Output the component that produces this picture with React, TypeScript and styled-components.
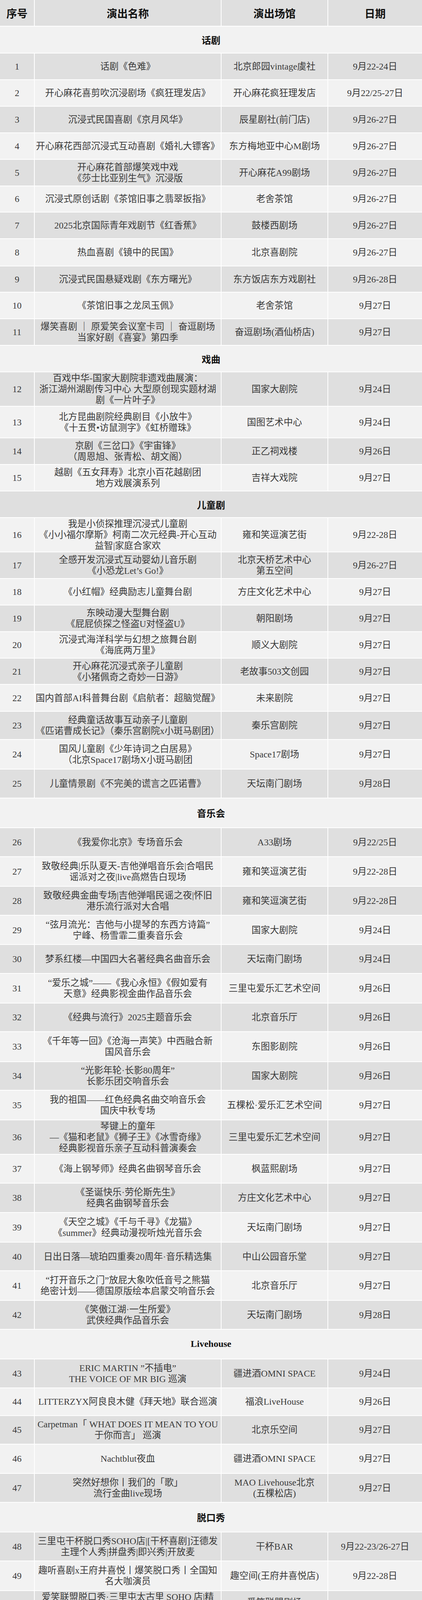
import React from 'react';
import styled, { createGlobalStyle } from 'styled-components';

const GlobalStyle = createGlobalStyle`
  html, body { margin: 0; padding: 0; background: #ffffff; }
  body { font-family: "Liberation Serif", "Noto Sans CJK SC", serif; }
`;

type RowData = [number, string, string, string, number];
type Section = { title: string; h: number; rows: RowData[] };

const sections: Section[] = [
  {
    title: '话剧', h: 67, rows: [
      [1, '话剧《色难》', '北京郎园vintage虞社', '9月22-24日', 66],
      [2, '开心麻花喜剪吹沉浸剧场《疯狂理发店》', '开心麻花疯狂理发店', '9月22/25-27日', 66],
      [3, '沉浸式民国喜剧《京月风华》', '辰星剧社(前门店)', '9月26-27日', 66],
      [4, '开心麻花西部沉浸式互动喜剧《婚礼大镖客》', '东方梅地亚中心M剧场', '9月26-27日', 66],
      [5, '开心麻花首部爆笑戏中戏\n《莎士比亚别生气》沉浸版', '开心麻花A99剧场', '9月26-27日', 65.5],
      [6, '沉浸式原创话剧《茶馆旧事之翡翠扳指》', '老舍茶馆', '9月26-27日', 65.5],
      [7, '2025北京国际青年戏剧节《红香蕉》', '鼓楼西剧场', '9月26-27日', 66],
      [8, '热血喜剧《镜中的民国》', '北京喜剧院', '9月26-27日', 68],
      [9, '沉浸式民国悬疑戏剧《东方曙光》', '东方饭店东方戏剧社', '9月26-28日', 65],
      [10, '《茶馆旧事之龙凤玉佩》', '老舍茶馆', '9月27日', 66],
      [11, '爆笑喜剧 ｜ 原爱笑会议室卡司 ｜ 奋逗剧场\n当家好剧《喜宴》第四季', '奋逗剧场(酒仙桥店)', '9月27日', 66],
    ],
  },
  {
    title: '戏曲', h: 66, rows: [
      [12, '百戏中华-国家大剧院非遗戏曲展演：\n浙江湖州湖剧传习中心 大型原创现实题材湖\n剧《一片叶子》', '国家大剧院', '9月24日', 86],
      [13, '北方昆曲剧院经典剧目《小放牛》\n《十五贯•访鼠测字》《虹桥赠珠》', '国图艺术中心', '9月24日', 79],
      [14, '京剧《三岔口》《宇宙锋》\n（周恩旭、张青松、胡文阁）', '正乙祠戏楼', '9月26日', 65.5],
      [15, '越剧《五女拜寿》北京小百花越剧团\n地方戏展演系列', '吉祥大戏院', '9月27日', 66.5],
    ],
  },
  {
    title: '儿童剧', h: 66, rows: [
      [16, '我是小侦探推理沉浸式儿童剧\n《小小福尔摩斯》柯南二次元经典-开心互动\n益智|家庭合家欢', '雍和笑逗演艺街', '9月22-28日', 86],
      [17, '全感开发沉浸式互动婴幼儿音乐剧\n《小恐龙Let\u2019s Go!》', '北京天桥艺术中心\n第五空间', '9月26-27日', 66],
      [18, '《小红帽》经典励志儿童舞台剧', '方庄文化艺术中心', '9月27日', 66],
      [19, '东映动漫大型舞台剧\n《屁屁侦探之怪盗U对怪盗U》', '朝阳剧场', '9月27日', 65.6],
      [20, '沉浸式海洋科学与幻想之旅舞台剧\n《海底两万里》', '顺义大剧院', '9月27日', 66.4],
      [21, '开心麻花沉浸式亲子儿童剧\n《小猪佩奇之奇妙一日游》', '老故事503文创园', '9月27日', 65.5],
      [22, '国内首部AI科普舞台剧《启航者：超脑觉醒》', '未来剧院', '9月27日', 66.2],
      [23, '经典童话故事互动亲子儿童剧\n《匹诺曹成长记》（秦乐宫剧院x小斑马剧团）', '秦乐宫剧院', '9月27日', 70.3],
      [24, '国风儿童剧《少年诗词之白居易》\n（北京Space17剧场X小斑马剧团', 'Space17剧场', '9月27日', 74],
      [25, '儿童情景剧《不完美的谎言之匹诺曹》', '天坛南门剧场', '9月28日', 72],
    ],
  },
  {
    title: '音乐会', h: 73.7, rows: [
      [26, '《我爱你北京》专场音乐会', 'A33剧场', '9月22/25日', 72.1],
      [27, '致敬经典|乐队夏天-吉他弹唱音乐会|合唱民\n谣派对之夜|live高燃告白现场', '雍和笑逗演艺街', '9月22-28日', 73.8],
      [28, '致敬经典金曲专场|吉他弹唱民谣之夜|怀旧\n港乐流行派对大合唱', '雍和笑逗演艺街', '9月22-28日', 72.4],
      [29, '“弦月流光：吉他与小提琴的东西方诗篇”\n宁峰、杨雪霏二重奏音乐会', '国家大剧院', '9月24日', 73.4],
      [30, '梦系红楼—中国四大名著经典名曲音乐会', '天坛南门剧场', '9月24日', 71.3],
      [31, '“爱乐之城”——《我心永恒》《假如爱有\n天意》经典影视金曲作品音乐会', '三里屯爱乐汇艺术空间', '9月26日', 74.3],
      [32, '《经典与流行》2025主题音乐会', '北京音乐厅', '9月26日', 71],
      [33, '《千年等一回》《沧海一声笑》中西融合新\n国风音乐会', '东图影剧院', '9月26日', 74.7],
      [34, '“光影年轮·长影80周年”\n长影乐团交响音乐会', '国家大剧院', '9月26日', 71.7],
      [35, '我的祖国——红色经典名曲交响音乐会\n国庆中秋专场', '五棵松·爱乐汇艺术空间', '9月27日', 74.1],
      [36, '琴键上的童年\n—《猫和老鼠》《狮子王》《冰雪奇缘》\n经典影视音乐亲子互动科普演奏会', '三里屯爱乐汇艺术空间', '9月27日', 85.2],
      [37, '《海上钢琴师》经典名曲钢琴音乐会', '枫蓝熙剧场', '9月27日', 72.3],
      [38, '《圣诞快乐·劳伦斯先生》\n经典名曲钢琴音乐会', '方庄文化艺术中心', '9月27日', 72.7],
      [39, '《天空之城》《千与千寻》《龙猫》\n《summer》经典动漫视听烛光音乐会', '天坛南门剧场', '9月27日', 74.3],
      [40, '日出日落—琥珀四重奏20周年·音乐精选集', '中山公园音乐堂', '9月27日', 71.5],
      [41, '“打开音乐之门”放屁大象吹低音号之熊猫\n绝密计划——德国原版绘本启蒙交响音乐会', '北京音乐厅', '9月27日', 73.8],
      [42, '《笑傲江湖·一生所爱》\n武侠经典作品音乐会', '天坛南门剧场', '9月28日', 72.1],
    ],
  },
  {
    title: 'Livehouse', h: 73.3, rows: [
      [43, 'ERIC MARTIN ”不插电”\nTHE VOICE OF MR BIG 巡演', '疆进酒OMNI SPACE', '9月24日', 72.1],
      [44, 'LITTERZYX阿良良木健《拜天地》联合巡演', '福浪LiveHouse', '9月26日', 69.2],
      [45, 'Carpetman「 WHAT DOES IT MEAN TO YOU\n于你而言」 巡演', '北京乐空间', '9月27日', 71],
      [46, 'Nachtblut夜血', '疆进酒OMNI SPACE', '9月27日', 73],
      [47, '突然好想你丨我们的「歌」\n流行金曲live现场', 'MAO Livehouse北京\n(五棵松店)', '9月27日', 72.2],
    ],
  },
  {
    title: '脱口秀', h: 73.8, rows: [
      [48, '三里屯干杯脱口秀SOHO店|[干杯喜剧]汪德发\n主理个人秀|拼盘秀|即兴秀|开放麦', '干杯BAR', '9月22-23/26-27日', 72],
      [49, '趣听喜剧x王府井喜悦丨爆笑脱口秀丨全国知\n名大咖演员', '趣空间(王府井喜悦店)', '9月22-28日', 74.6],
      [50, '爱笑联盟脱口秀·三里屯太古里 SOHO 店|精\n品喜剧之夜|周一至周日|网红打卡地|即兴开\n放麦吐槽专场', '爱笑联盟剧场\n(三里屯SOHO店)', '9月22-28日', 84.4],
      [51, '磁场喜剧x南锣鼓巷必打卡 ｜ 全国知名脱口\n秀大咖 ｜ 周一至周日持续爆笑 ｜', '磁场南锣剧场', '9月22-28日', 73.7],
      [52, '三里屯太古里爆笑脱口秀|天天综艺卡司|吐\n槽爆笑大会|开心互动|即兴喜剧之夜精品秀', '三里屯脱口秀俱乐部', '9月22-28日', 72.3],
      [53, '三里屯脱口秀丨周一至周日丨综艺卡司丨吐\n槽爆笑大会丨开心互动丨【大笑喜剧】即兴\n喜剧爆笑之夜精品秀>', '北京脱口秀空间剧场', '9月22-28日', 85.7],
      [54, '三里屯太古里脱口秀喜剧丨限量特惠丨每周\n一至周日爆笑脱口秀喜剧大会丨魔脱喜剧', '魔脱喜剧-三里屯SOHO店', '9月22-28日', 72.1],
      [55, '脱口秀入门|趣听喜剧开放麦|\n周中爆笑不间断！', '单立人DownTown', '9月22-23/28日', 74.2],
      [56, '波波笑剧场-常营陆港城店-北京必打卡地 爆\n笑单口喜剧+即兴喜剧', '波波笑剧场\n(北京常营陆港城店)', '9月23-28日', 72],
      [57, '波波笑剧场-三里屯爆笑脱口秀+即兴喜剧-\n8.16帅帅《男左女右》-李波的剧场-必打卡\n东北喜剧天花板', '波波笑剧场(北京店)', '9月23-28日', 86],
      [58, '喜番喜剧丨酒吧精品脱口秀丨边喝边看丨综\n艺卡司丨解压打卡', '喜番club', '9月24-27日', 72],
      [59, '大逗喜剧丨开放麦丨单口喜剧丨漫才丨\n即兴丨相声丨', '宣南剧场', '9月26日', 74],
      [60, '趣听喜剧x西城 ｜ 艾斯单口喜剧专场\n《我展示》', '趣听喜剧(西直门店)', '9月26日', 72.4],
      [61, '趣听喜剧x东城鼓楼丨爆笑脱口秀丨\n全国知名大咖演员', '小金鱼剧场', '9月26-27日', 72.1],
      [62, '万达五棵松脱口秀专场丨开心解压丨吐槽大\n会丨即兴丨魔术丨嘻哈爱乐丨华熙live', '格乐丽雅·G婚礼艺术中\n心(五棵松万达店)', '9月27日', 72.9],
      [63, '听云轩周末喜剧脱口秀', '王四营听云轩剧场', '9月27日', 73.4],
      [64, '趣听喜剧x朝阳望京丨爆笑脱口秀丨\n全国知名大咖演员', '开心麻花磁剧场', '9月27日', 72.2],
      [65, '长辛八点半脱口秀', '长辛八点半演艺空间', '9月27-28日', 73.6],
      [66, '猫头鹰喜剧丨每周二三四六脱口秀开放麦/\n精选秀@东四', 'NEST 巢空间', '9月27-28日', 72.1],
      [67, '脱口秀开放麦----五棵松剧场', '嘻哈包袱铺五棵松剧场', '9月27-28日', 71.3],
      [68, '周日开放麦丨东城英语单口喜剧丨北京英文\n脱口秀（城堡喜剧）', '南阳共享际剧场', '9月28日', 71],
    ],
  },
  {
    title: '曲艺', h: 74, rows: [
      [69, '《德云社相声大会》', '德云社三里屯剧场', '9月22-28日', 71],
      [70, '《德云社相声大会》', '广德楼戏园', '9月22-28日', 73.5],
      [71, '《德云社相声大会》', '三庆园', '9月22-28日', 72.5],
      [72, '京味儿相声专场演出', '老舍茶馆', '9月22-28日', 73.8],
      [73, '北京刘老根大舞台', '北京刘老根大舞台', '9月22-28日', 72.1],
      [74, '评书连播丨五书齐开—国潮故事每日打卡丨\n精彩爆笑来袭', '火家瓦社', '9月22-28日', 73.7],
      [75, '北京·相声剧+相声-沉浸式互动相声live', '听海阁相声会馆', '9月22-28日', 71.7],
      [76, '【嘻哈包袱铺】相声专场演出-五棵松剧场', '嘻哈包袱铺五棵松剧场', '9月22-28日', 73.7],
      [77, '《德云社相声大会》', '德云社学院路剧场', '9月23-28日', 72.6],
      [78, '北京曲艺团“京味儿剧场”\n《北京记忆》曲艺专场演出', '天坛南门剧场', '9月26日', 72.9],
      [79, '北京曲艺团“京味儿”剧场曲艺专场演出', '中国木偶剧院', '9月27日', 71.5],
      [80, '北京曲艺团“京味儿剧场“\n《笑满京城》相声专场演出', '天坛南门剧场', '9月27日', 74],
      [81, '大逗相声专场——宣南剧场', '宣南剧场', '9月27日', 72.4],
      [82, '红壶相声社·精品相声大会', '方庄文化艺术中心', '9月27日', 74.2],
      [83, '“千年等一回”——上海评弹团专场', '国家大剧院', '9月27日', 71.4],
      [84, '北京曲艺团&老舍茶馆《鼓曲》专场', '老舍茶馆', '9月28日', 74],
      [85, '“红楼梦中人”——评弹流派演唱会', '国家大剧院', '9月28日', 72.5],
    ],
  },
  {
    title: '综艺及其他', h: 73, rows: [
      [86, '雍和沉浸魔术科学《魔法与物理奇妙》\n互动儿童剧|家庭合家欢学院', '雍和笑逗演艺街', '9月22-28日', 71.5],
      [87, '《四季北京.茶》京味综艺演出', '老舍茶馆', '9月22-28日', 73.9],
      [88, '《梦华·长城》', '北京世园公园', '9月22-28日', 72.5],
      [89, '功夫秀', '秦乐宫剧院', '9月22-28日', 72.1],
      [90, '大型多媒体杂技剧《绝技秀之蜀国英雄》', '红剧场', '9月22-28日', 71],
      [91, '《欢乐北京》-北京歌剧舞剧院驻场演出', '广德楼戏园', '9月26-28日', 72.9],
      [92, '沉浸式亲子互动\n《泡泡魔法2100》魔术泡泡秀', '三里屯爱乐汇艺术空间', '9月27日', 72.2],
      [93, '沉浸式互动魔术科学实验秀《童梦奇缘》', '辰星剧社(前门店)', '9月27日', 73],
      [94, '亲子魔术儿童互动秀 ｜ 见证奇迹的时刻《魔\n法学院奇妙夜》 ｜ 磁场喜剧×南锣鼓巷', '磁场南锣剧场', '9月27日', 72.4],
      [95, '亲子魔幻派对·中国首个魔术肢体默剧“查\n尔先生的皮箱”', '三里屯爱乐汇艺术空间', '9月27日', 73.5],
      [96, '三里屯《演奏家的打击乐》沉浸互动|音乐启\n蒙|魔法丨亲子儿童剧丨开心小麦丨物理', '爱笑联盟剧场\n(三里屯SOHO店)', '9月27-28日', 72.5],
      [97, '《好歌天天唱》\n——北京歌剧舞剧院驻场演出', '火家瓦社', '9月27-28日', 73.4],
    ],
  },
];

const SHADE = '#dfdfdf';
const LIGHT = '#f2f2f2';

const Table = styled.div`
  width: 1080px;
  display: flex;
  flex-direction: column;
  gap: 2px;
  background: #ffffff;
  color: #3a3a3a;
  font-family: "Liberation Serif", "Noto Sans CJK SC", serif;
`;

const Row = styled.div<{ $h: number; $shade: boolean }>`
  --bg: ${p => (p.$shade ? SHADE : LIGHT)};
  display: grid;
  grid-template-columns: 87px 476px 271px 1fr;
  column-gap: 2px;
  height: ${p => p.$h}px;
  background: #ffffff;
`;

const Cell = styled.div`
  background: var(--bg);
  display: flex;
  flex-direction: column;
  align-items: center;
  justify-content: center;
  text-align: center;
  font-size: 23.5px;
  min-width: 0;
`;

const HeadCell = styled(Cell)`
  font-size: 27px;
  font-weight: 700;
  color: #111111;
`;

const Line = styled.span`
  display: block;
  white-space: nowrap;
  line-height: 28px;
`;

const SectionRow = styled.div<{ $h: number; $shade: boolean }>`
  height: ${p => p.$h}px;
  background: ${p => (p.$shade ? SHADE : LIGHT)};
  display: flex;
  align-items: center;
  justify-content: center;
  font-size: 24px;
  font-weight: 700;
  color: #111111;
`;

const Footer = styled.div<{ $shade: boolean }>`
  height: 66px;
  background: ${p => (p.$shade ? SHADE : LIGHT)};
  display: flex;
  align-items: center;
  padding-left: 24px;
  font-size: 24px;
  color: #333333;
  white-space: nowrap;
`;

const Lines: React.FC<{ text: string }> = ({ text }) => (
  <>
    {text.split('\n').map((l, i) => (
      <Line key={i}>{l}</Line>
    ))}
  </>
);

export default function App() {
  let idx = 0;
  const items: React.ReactNode[] = [];
  items.push(
    <Row key="head" $h={66} $shade={idx++ % 2 === 0}>
      <HeadCell>序号</HeadCell>
      <HeadCell>演出名称</HeadCell>
      <HeadCell>演出场馆</HeadCell>
      <HeadCell>日期</HeadCell>
    </Row>
  );
  sections.forEach(sec => {
    items.push(
      <SectionRow key={'s' + sec.title} $h={sec.h} $shade={idx++ % 2 === 0}>
        {sec.title}
      </SectionRow>
    );
    sec.rows.forEach(([no, name, venue, date, h]) => {
      items.push(
        <Row key={no} $h={h} $shade={idx++ % 2 === 0}>
          <Cell><Line>{no}</Line></Cell>
          <Cell><Lines text={name} /></Cell>
          <Cell><Lines text={venue} /></Cell>
          <Cell><Line>{date}</Line></Cell>
        </Row>
      );
    });
  });
  const footerShade = idx++ % 2 === 0;
  return (
    <>
      <GlobalStyle />
      <Table>
        {items}
        <Footer $shade={footerShade}>注：演出信息来源于票务平台，可能存在动态调整，请以实际演出信息为准</Footer>
      </Table>
    </>
  );
}
